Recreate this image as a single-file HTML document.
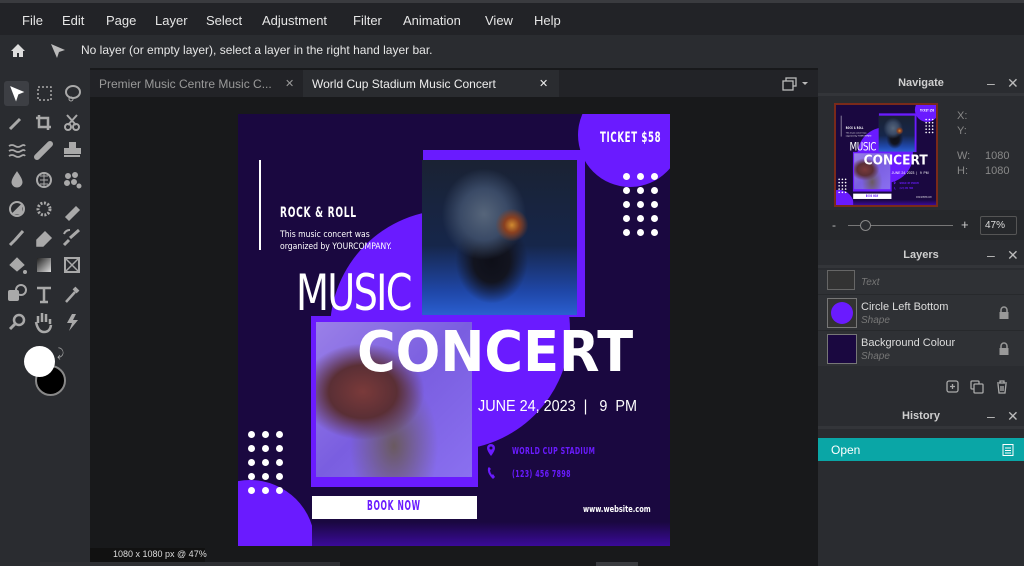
<!DOCTYPE html>
<html><head><meta charset="utf-8">
<style>
*{margin:0;padding:0;box-sizing:border-box}
html,body{width:1024px;height:566px;overflow:hidden}
body{background:#18191b;font-family:"Liberation Sans",sans-serif;position:relative;color:#ddd}
.abs{position:absolute}
#menu{left:0;top:0;width:1024px;height:35px;background:#222327;border-top:3px solid #3a3b3f}
#menu span{position:absolute;top:10px;font-size:13px;color:#e6e6e6}
#bar{left:0;top:35px;width:1024px;height:33px;background:#2a2c30}
#tools{left:0;top:68px;width:90px;height:498px;background:#2a2c30;overflow:hidden}
#tabs{left:90px;top:70px;width:728px;height:27px;background:#222327}
.tab{position:absolute;top:0;height:27px;font-size:12px;padding:7px 0 0 9px}
#right{left:818px;top:68px;width:206px;height:498px;background:#2a2c30;overflow:hidden}
.ph{position:absolute;left:0;width:206px;height:26px;background:#2a2c30;border-bottom:3px solid #333539}
.ph b{position:absolute;left:0;width:206px;text-align:center;top:7px;font-size:11px;color:#cfcfcf}
.ph i{position:absolute;top:5px;font-style:normal;font-size:14px;color:#bbb}
.poster{position:absolute;width:432px;height:432px;background:#1a0840;overflow:hidden}
.dot{position:absolute;width:7px;height:7px;border-radius:50%;background:#fff}
.cond{font-family:"DejaVu Sans Condensed","Liberation Sans Narrow",sans-serif;white-space:nowrap;transform-origin:left top}
svg{display:block}
</style></head><body>
<div id="menu" class="abs">
<span style="left:22px">File</span><span style="left:62px">Edit</span><span style="left:106px">Page</span><span style="left:155px">Layer</span><span style="left:206px">Select</span><span style="left:262px">Adjustment</span><span style="left:353px">Filter</span><span style="left:403px">Animation</span><span style="left:485px">View</span><span style="left:534px">Help</span>
</div>
<div id="bar" class="abs">
<svg class="abs" style="left:10px;top:8px" width="16" height="15" viewBox="0 0 16 15"><path d="M8 1L1 8h2v6h4v-4h2v4h4V8h2z" fill="#ddd"/></svg>
<svg class="abs" style="left:50px;top:8px" width="16" height="16" viewBox="0 0 16 16"><path d="M1 1l14 6-6 2-2 6z" fill="#bbb"/></svg>
<span class="abs" style="left:81px;top:8px;font-size:12px;color:#e6e6e6">No layer (or empty layer), select a layer in the right hand layer bar.</span>
</div>
<div id="tools" class="abs">
<div class="abs" style="left:4px;top:13px;width:25px;height:25px;background:#3d3f44;border-radius:3px"></div>
<svg class="abs" style="left:0;top:-68px" width="90" height="420" viewBox="0 0 90 420" fill="#a9a9a9" stroke="#a9a9a9">
<path d="M11 87l12 5-5 2-2 6z" fill="#fff" stroke="#fff"/>
<rect x="38" y="87" width="13" height="13" fill="none" stroke-dasharray="2 2" stroke-width="1.5"/>
<ellipse cx="73" cy="92" rx="7" ry="6" fill="none" stroke-width="2"/><circle cx="71" cy="99" r="2" fill="none"/>
<path d="M10 129l10-10" stroke-width="3"/><path d="M39 115v12h12M36 118h12v12" fill="none" stroke-width="2.5"/>
<circle cx="68" cy="127" r="3" fill="none" stroke-width="2"/><circle cx="76" cy="127" r="3" fill="none" stroke-width="2"/><path d="M67 115l9 10M77 115l-9 10" stroke-width="2"/>
<path d="M9 146q3-2 6 0t6 0t4 0M9 151q3-2 6 0t6 0t4 0M9 156q3-2 6 0t6 0t4 0" fill="none" stroke-width="1.8"/>
<path d="M37 157l13-13" stroke-width="6" stroke-linecap="round"/>
<path d="M70 143h5v6h5v4H65v-4h5zM64 156h16" stroke-width="2"/>
<path d="M17 172q-5 7-5 10a5 5 0 0 0 10 0q0-3-5-10z"/>
<circle cx="44" cy="180" r="7" fill="none" stroke-width="2"/><path d="M40 176h8M40 180h8M40 184h8M44 174v12" stroke-width="1"/>
<circle cx="68" cy="176" r="2.5"/><circle cx="75" cy="175" r="2.5"/><circle cx="67" cy="183" r="2.5"/><circle cx="74" cy="182" r="2.5"/><circle cx="79" cy="186" r="2"/>
<circle cx="17" cy="209" r="7" fill="none" stroke-width="2"/><path d="M12 214l10-10v10z"/>
<circle cx="44" cy="209" r="6" fill="none" stroke-width="3" stroke-dasharray="2 1.5"/>
<path d="M66 217l10-10 3 3-10 10z" stroke-width="1.5"/>
<path d="M10 245l5-5M15 240l8-9" stroke-width="3"/>
<path d="M37 240l8-8 6 6-8 8h-6z" stroke-width="1.5"/>
<path d="M64 245l5-5M70 238l9-8" stroke-width="3"/><path d="M64 234a6 6 0 0 1 6-4" fill="none" stroke-width="2"/>
<path d="M10 265l7-7 7 7-7 6z"/><circle cx="25" cy="272" r="1.5"/>
<rect x="37" y="258" width="14" height="14" stroke="none" fill="url(#g)"/>
<rect x="65" y="258" width="14" height="14" fill="none" stroke-width="2"/><path d="M65 258l14 14M79 258l-14 14" stroke-width="1.5"/>
<rect x="8" y="290" width="11" height="11" rx="2" stroke="none"/><circle cx="21" cy="290" r="5" fill="none" stroke-width="2"/>
<path d="M37 288h14M44 288v14M40 302h8" stroke-width="2.5"/>
<path d="M66 302l9-10" stroke-width="2.5"/><path d="M74 288l4 4" stroke-width="4"/>
<circle cx="19" cy="320" r="5" fill="none" stroke-width="2.5"/><path d="M15 324l-5 5" stroke-width="3"/>
<path d="M38 323v-7M42 322v-9M46 322v-8M50 324v-5M36 322q2 10 8 10q6 0 7-7" stroke-width="2.5" fill="none"/>
<path d="M72 314l-5 9h5l-3 8 9-11h-5l3-6z" stroke="none"/>
<defs><linearGradient id="g" x1="0" y1="0" x2="1" y2="1"><stop offset="0" stop-color="#222"/><stop offset="1" stop-color="#ddd"/></linearGradient></defs>
</svg>
<div class="abs" style="left:35px;top:297px;width:31px;height:31px;border-radius:50%;background:#000;border:2px solid #888"></div>
<div class="abs" style="left:24px;top:278px;width:31px;height:31px;border-radius:50%;background:#fff"></div>
<span class="abs" style="left:57px;top:278px;font-size:12px;color:#aaa">⤸</span>
</div>
<div id="tabs" class="abs">
<div class="tab" style="left:0;width:212px;color:#9a9a9a;background:#222327">Premier Music Centre Music C... <span style="position:absolute;left:195px;font-size:11px">✕</span></div>
<div class="tab" style="left:213px;width:256px;color:#eee;background:#2a2c30">World Cup Stadium Music Concert <span style="position:absolute;left:236px;font-size:11px">✕</span></div>
<svg class="abs" style="left:692px;top:7px" width="28" height="14" viewBox="0 0 28 14"><rect x="4" y="1" width="10" height="8" fill="none" stroke="#bbb" stroke-width="1.3"/><rect x="1" y="4" width="10" height="9" fill="#222327" stroke="#bbb" stroke-width="1.3"/><path d="M20 5h6l-3 3z" fill="#bbb"/></svg>
</div>

<div class="poster" id="P" style="left:238px;top:114px">
<div class="abs" style="left:340px;top:-31px;width:104px;height:104px;border-radius:50%;background:#6a1bff"></div>
<div class="abs cond" style="left:362px;top:16px;font-size:14px;font-weight:bold;color:#fff;letter-spacing:1px;transform:scaleX(.68)">TICKET $58</div>
<div class="abs" style="left:92px;top:96px;width:240px;height:240px;border-radius:50%;background:#6a1bff"></div>
<div class="abs" style="left:21px;top:46px;width:2px;height:90px;background:#fff"></div>
<div class="abs cond" style="left:42px;top:91px;font-size:14px;font-weight:bold;color:#fff;letter-spacing:1px;transform:scaleX(.72)">ROCK &amp; ROLL</div>
<div class="abs cond" style="left:42px;top:115px;font-size:9px;color:#fff;line-height:12px;transform:scaleX(.95)">This music concert was<br>organized by YOURCOMPANY.</div>
<div class="abs" style="left:185px;top:36px;width:162px;height:167px;background:#6a1bff"></div>
<div class="abs" style="left:184px;top:46px;width:155px;height:155px;background:radial-gradient(circle at 58% 42%,#d08a30 0,#8a4020 6%,transparent 13%),radial-gradient(ellipse at 40% 35%,#56657a 0,#3a4a66 18%,transparent 32%),radial-gradient(ellipse at 45% 65%,#0e0f18 0,#12141f 15%,transparent 30%),linear-gradient(180deg,#1a2233 0%,#16264a 55%,#1f47a8 85%,#2a5fd0 100%)"></div>
<div class="abs" style="left:58px;top:150px;font-size:50px;color:#fff;font-family:'DejaVu Sans Condensed',sans-serif;font-weight:200;letter-spacing:-2px;transform:scaleX(.85);transform-origin:left;white-space:nowrap">MUSIC</div>
<div class="abs" style="left:73px;top:202px;width:167px;height:171px;background:#6a1bff"></div>
<div class="abs" style="left:78px;top:208px;width:156px;height:155px;background:radial-gradient(ellipse at 30% 45%,#7a3a3a 0,#5a2f35 22%,transparent 40%),radial-gradient(ellipse at 50% 80%,#6a5a60 0,transparent 40%),linear-gradient(135deg,#9a80e8,#7a5ee0 50%,#8a70f0)"></div>
<div class="abs" style="left:119px;top:206px;font-size:56px;font-weight:bold;color:#fff;font-family:'DejaVu Sans',sans-serif;white-space:nowrap;transform:scaleX(.94);transform-origin:left top">CONCERT</div>
<div class="abs" style="left:240px;top:284px;font-size:16px;color:#fff;white-space:nowrap;transform:scaleX(.9);transform-origin:left top">JUNE 24, 2023 &nbsp;| &nbsp; 9 &nbsp;PM</div>
<svg class="abs" style="left:248px;top:330px" width="10" height="40" viewBox="0 0 10 40"><path d="M5 0a4 4 0 0 0-4 4c0 3 4 8 4 8s4-5 4-8a4 4 0 0 0-4-4z" fill="#6a1bff"/><circle cx="5" cy="4" r="1.5" fill="#1a0840"/><path d="M2 24q-1 4 3 9l2 2 2-2-2-3-1 1q-2-3-2-5l1-1-2-2z" fill="#6a1bff"/></svg>
<div class="abs cond" style="left:274px;top:332px;font-size:10px;color:#6a1bff;font-weight:bold;letter-spacing:.5px;transform:scaleX(.7)">WORLD CUP STADIUM</div>
<div class="abs cond" style="left:274px;top:355px;font-size:10px;color:#6a1bff;font-weight:bold;letter-spacing:.5px;transform:scaleX(.7)">(123) 456 7898</div>
<div class="abs" style="left:-53px;top:366px;width:130px;height:130px;border-radius:50%;background:#6a1bff"></div>
<div class="abs" style="left:74px;top:408px;width:358px;height:24px;background:linear-gradient(180deg,#1a0840,#3a0a9a)"></div>
<div class="abs" style="left:74px;top:382px;width:165px;height:23px;background:#fff"></div>
<div class="abs cond" style="left:129px;top:385px;font-size:13px;font-weight:bold;color:#6a1bff;letter-spacing:1px;transform:scaleX(.65)">BOOK NOW</div>
<div class="abs cond" style="left:345px;top:391px;font-size:9px;font-weight:bold;color:#fff;transform:scaleX(.82)">www.website.com</div>
<div id="dots"></div>
</div>

<div class="abs" style="left:90px;top:548px;width:115px;height:14px;background:#111"></div>
<span class="abs" style="left:113px;top:549px;font-size:9px;color:#ddd">1080 x 1080 px @ 47%</span>
<div class="abs" style="left:40px;top:562px;width:300px;height:4px;background:#2e2f33"></div>
<div class="abs" style="left:596px;top:562px;width:42px;height:4px;background:#3a3b3f"></div>

<div id="right" class="abs">
<div class="ph" style="top:2px"><b>Navigate</b><i style="left:169px">–</i><i style="left:189px">✕</i></div>
<div class="abs" style="left:16px;top:35px;width:104px;height:104px;border:2px solid #7a2a1a;overflow:hidden;background:#1a0840">
<div id="thumbwrap" style="position:absolute;left:0;top:0;width:432px;height:432px;transform:scale(0.232);transform-origin:0 0"></div>
</div>
<span class="abs" style="left:139px;top:42px;font-size:11px;color:#888">X:</span>
<span class="abs" style="left:139px;top:57px;font-size:11px;color:#888">Y:</span>
<span class="abs" style="left:139px;top:82px;font-size:11px;color:#888">W:</span><span class="abs" style="left:167px;top:82px;font-size:11px;color:#888">1080</span>
<span class="abs" style="left:139px;top:97px;font-size:11px;color:#888">H:</span><span class="abs" style="left:167px;top:97px;font-size:11px;color:#888">1080</span>
<div class="abs" style="left:0;top:142px;width:206px;height:30px;background:#26282b"></div>
<span class="abs" style="left:14px;top:150px;font-size:12px;color:#bbb">-</span>
<div class="abs" style="left:30px;top:157px;width:105px;height:1px;background:#777"></div>
<div class="abs" style="left:42px;top:152px;width:11px;height:11px;border-radius:50%;border:1.5px solid #888;background:#2a2c30"></div>
<span class="abs" style="left:143px;top:149px;font-size:13px;color:#ccc">+</span>
<div class="abs" style="left:162px;top:148px;width:37px;height:19px;border:1px solid #555;border-radius:2px;font-size:10px;color:#ddd;padding:3px 0 0 4px">47%</div>
<div class="ph" style="top:174px"><b>Layers</b><i style="left:169px">–</i><i style="left:189px">✕</i></div>
<div class="abs" style="left:0;top:202px;width:206px;height:96px;background:#2f3135"></div>
<div class="abs" style="left:9px;top:202px;width:28px;height:20px;border:1px solid #666;background:#333"></div>
<span class="abs" style="left:43px;top:209px;font-size:10px;color:#777;font-style:italic">Text</span>
<div class="abs" style="left:0;top:226px;width:206px;height:1px;background:#27292c"></div>
<div class="abs" style="left:9px;top:230px;width:30px;height:30px;border:1px solid #777;background:#333"><div style="position:absolute;left:3px;top:3px;width:22px;height:22px;border-radius:50%;background:#6a1bff"></div></div>
<span class="abs" style="left:43px;top:233px;font-size:11px;color:#ddd">Circle Left Bottom</span>
<span class="abs" style="left:43px;top:247px;font-size:10px;color:#777;font-style:italic">Shape</span>
<div class="abs" style="left:0;top:262px;width:206px;height:1px;background:#27292c"></div>
<div class="abs" style="left:9px;top:266px;width:30px;height:30px;border:1px solid #777;background:#1a0840"></div>
<span class="abs" style="left:43px;top:269px;font-size:11px;color:#ddd">Background Colour</span>
<span class="abs" style="left:43px;top:283px;font-size:10px;color:#777;font-style:italic">Shape</span>
<svg class="abs" style="left:180px;top:238px" width="12" height="50" viewBox="0 0 12 50"><path d="M3 6V4a3 3 0 0 1 6 0v2" fill="none" stroke="#999" stroke-width="1.5"/><rect x="1.5" y="6" width="9" height="7" fill="#999"/><path d="M3 42v-2a3 3 0 0 1 6 0v2" fill="none" stroke="#999" stroke-width="1.5"/><rect x="1.5" y="42" width="9" height="7" fill="#999"/></svg>
<svg class="abs" style="left:127px;top:311px" width="70" height="16" viewBox="0 0 70 16" fill="none" stroke="#aaa" stroke-width="1.3"><rect x="2" y="2" width="11" height="11" rx="2"/><path d="M7.5 5v5M5 7.5h5"/><rect x="26" y="2" width="8" height="8" rx="1"/><rect x="29" y="5" width="9" height="9" rx="1" fill="#2a2c30"/><path d="M52 4h10M55 4V2h4v2M53 5l1 9h6l1-9M56 7v5M58 7v5"/></svg>
<div class="ph" style="top:335px"><b>History</b><i style="left:169px">–</i><i style="left:189px">✕</i></div>
<div class="abs" style="left:0;top:370px;width:206px;height:23px;background:#0aa6a6"></div>
<span class="abs" style="left:13px;top:375px;font-size:12px;color:#fff">Open</span>
<svg class="abs" style="left:184px;top:375px" width="12" height="13" viewBox="0 0 12 13" fill="none" stroke="#fff" stroke-width="1"><rect x="1" y="1.5" width="10" height="11"/><path d="M3 5h6M3 7.5h6M3 10h6"/></svg>
</div>
<script>
var d=document.getElementById('dots'),h='';
[[388,62],[13,320]].forEach(function(o){for(var r=0;r<5;r++)for(var c=0;c<3;c++)h+='<div class="dot" style="left:'+(o[0]+c*14-3)+'px;top:'+(o[1]+r*14-3)+'px"></div>';});
d.innerHTML=h;
var p=document.getElementById('P').cloneNode(true);p.id='';p.style.left='0';p.style.top='0';
document.getElementById('thumbwrap').appendChild(p);
</script>
</body></html>
